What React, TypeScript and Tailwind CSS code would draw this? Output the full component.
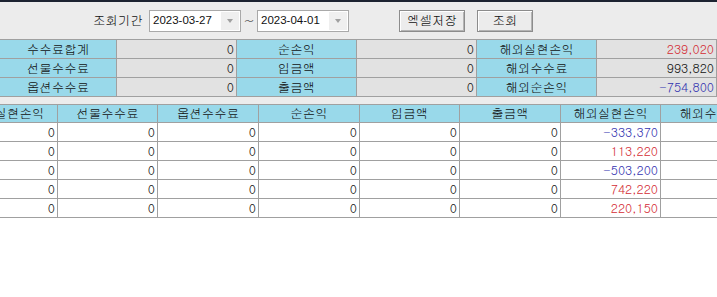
const FONT = "font-['Gulim','Noto_Sans_CJK_KR','Noto_Sans',sans-serif]";

const SUMMARY = [
  ["수수료합계", "0", "순손익", "0", "해외실현손익", "239,020"],
  ["선물수수료", "0", "입금액", "0", "해외수수료", "993,820"],
  ["옵션수수료", "0", "출금액", "0", "해외순손익", "-754,800"],
];

const HEADERS = ["해외실현손익", "선물수수료", "옵션수수료", "순손익", "입금액", "출금액", "해외실현손익", "해외수수료"];

const ROWS = [
  ["0", "0", "0", "0", "0", "0", "-333,370", ""],
  ["0", "0", "0", "0", "0", "0", "113,220", ""],
  ["0", "0", "0", "0", "0", "0", "-503,200", ""],
  ["0", "0", "0", "0", "0", "0", "742,220", ""],
  ["0", "0", "0", "0", "0", "0", "220,150", ""],
];

function tone(v: string) {
  if (v.startsWith("-")) return "text-[#3232b0]";
  if (v === "239,020" || /^(113|742|220),/.test(v)) return "text-[#d42c34]";
  return "text-[#111]";
}

function DateBox({ value }: { value: string }) {
  return (
    <div className="flex h-[22px] w-[92px] items-stretch border border-[#a9a9a9] bg-white">
      <span className="flex flex-1 items-center pl-[3px] text-[11.5px] text-[#111] font-['Liberation_Sans',sans-serif]">
        {value}
      </span>
      <span className="my-[1px] mr-[1px] flex w-[18px] items-center justify-center bg-[#efefef]">
        <span className="h-0 w-0 border-x-[3px] border-t-[4px] border-x-transparent border-t-[#a0a0a0]" />
      </span>
    </div>
  );
}

function Btn({ label, w }: { label: string; w: string }) {
  return (
    <button
      className={`${w} h-[22px] border border-[#8c8c8c] bg-[#ececec] text-[12.5px] text-[#111] shadow-[inset_1px_1px_0_#ffffff,inset_-1px_-1px_0_#b4b4b4]`}
    >
      {label}
    </button>
  );
}

export default function App() {
  return (
    <div className={`h-[297px] w-[717px] overflow-hidden bg-white ${FONT}`}>
      <div className="h-[2px] bg-[#1c2331]" />

      {/* toolbar */}
      <div className="flex h-[37px] items-center bg-[#ececec] pl-[93px]">
        <span className="mr-[6px] whitespace-nowrap text-[12.5px] text-[#111]">조회기간</span>
        <DateBox value="2023-03-27" />
        <span className="flex w-[16px] justify-center text-[12px] text-[#333]">~</span>
        <DateBox value="2023-04-01" />
        <div className="ml-[50px] flex gap-[12px]">
          <Btn label="엑셀저장" w="w-[66px]" />
          <Btn label="조회" w="w-[56px]" />
        </div>
      </div>

      {/* summary */}
      <div className="grid grid-cols-[117px_120px_120px_120px_120px_120px] border-t border-[#a0a0a0] bg-[#ececec]">
        {SUMMARY.flat().map((v, i) => {
          const label = i % 2 === 0;
          return (
            <div
              key={i}
              className={`flex h-[19px] items-center border-b border-r border-[#a0a0a0] text-[12.5px] ${
                label
                  ? "justify-center bg-[#99d9ea] text-[#111]"
                  : `justify-end bg-[#e2e2e2] pr-[2px] ${tone(v)}`
              }`}
            >
              {v}
            </div>
          );
        })}
      </div>

      <div className="h-[7px] bg-[#ececec]" />

      {/* grid */}
      <div className="overflow-hidden">
        <div className="-ml-[43px] grid w-[804px] grid-cols-[101px_100px_101px_101px_100px_101px_100px_100px] border-t border-[#a0a0a0]">
          {HEADERS.map((h, i) => (
            <div
              key={i}
              className="flex h-[18px] items-center justify-center whitespace-nowrap border-b border-r border-[#a0a0a0] bg-[#99d9ea] text-[12.5px] text-[#111]"
            >
              {h}
            </div>
          ))}
          {ROWS.flat().map((v, i) => (
            <div
              key={i}
              className={`flex h-[19px] items-center justify-end border-b border-r border-[#a0a0a0] bg-white pr-[2px] text-[12.5px] ${tone(v)}`}
            >
              {v}
            </div>
          ))}
        </div>
      </div>
    </div>
  );
}
